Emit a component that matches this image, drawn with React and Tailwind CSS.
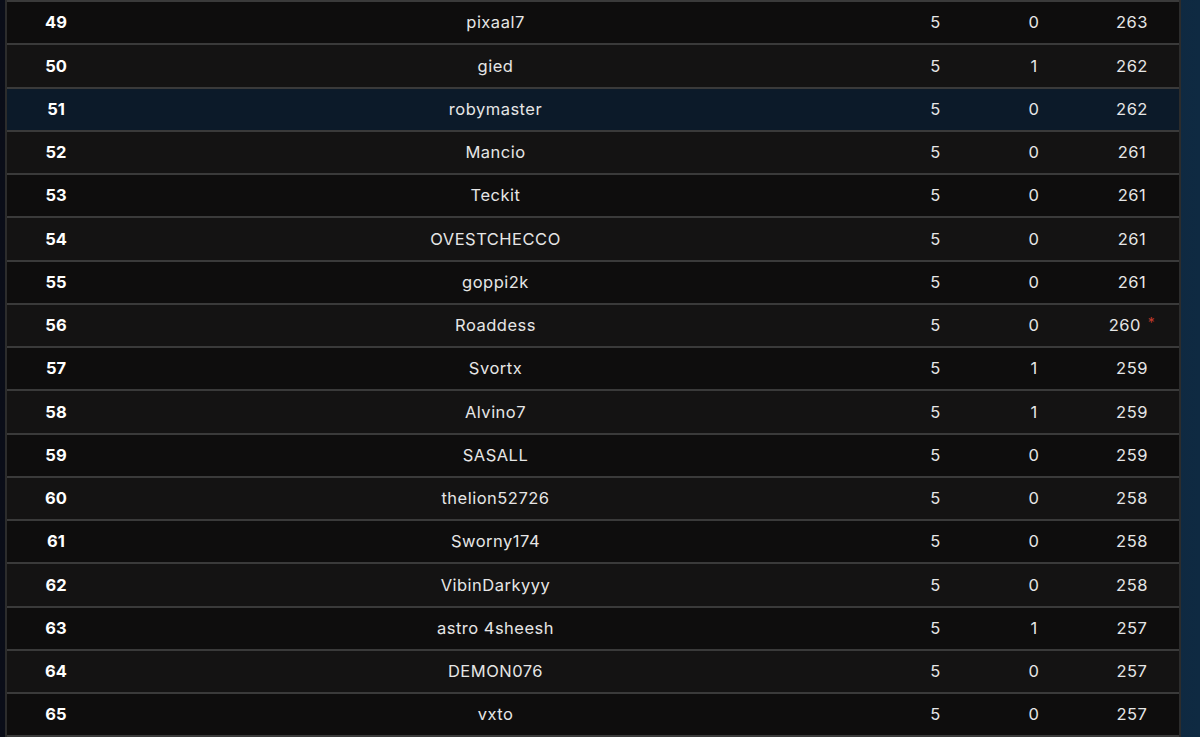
import React from 'react';

// leaderboard rows: rank, player, played, bonus, points
const rows = [
  [49, 'pixaal7', 5, 0, 263],
  [50, 'gied', 5, 1, 262],
  [51, 'robymaster', 5, 0, 262],
  [52, 'Mancio', 5, 0, 261],
  [53, 'Teckit', 5, 0, 261],
  [54, 'OVESTCHECCO', 5, 0, 261],
  [55, 'goppi2k', 5, 0, 261],
  [56, 'Roaddess', 5, 0, 260, true],
  [57, 'Svortx', 5, 1, 259],
  [58, 'Alvino7', 5, 1, 259],
  [59, 'SASALL', 5, 0, 259],
  [60, 'thelion52726', 5, 0, 258],
  [61, 'Sworny174', 5, 0, 258],
  [62, 'VibinDarkyyy', 5, 0, 258],
  [63, 'astro 4sheesh', 5, 1, 257],
  [64, 'DEMON076', 5, 0, 257],
  [65, 'vxto', 5, 0, 257],
];

const HIGHLIGHT = 51;

const Row = ({ rank, name, played, bonus, points, flagged }) => {
  const bg =
    rank === HIGHLIGHT
      ? 'bg-[#0c1a29]'
      : rank % 2 === 0
      ? 'bg-[#141313]'
      : 'bg-[#0e0d0d]';

  return (
    <div
      className={`grid grid-cols-[98px_781px_99px_98px_98px] h-[43.25px] border-t-2 border-[#3a3a3a] items-center text-[16.5px] tracking-[0.03em] text-[#e6e6e6] ${bg}`}
    >
      <div className="text-center font-bold text-white tracking-normal">{rank}</div>
      <div className="text-center">{name}</div>
      <div className="text-center">{played}</div>
      <div className="text-center">{bonus}</div>
      <div className="text-center">
        {points}
        {flagged && (
          <span className="relative top-[-3px] ml-[7px] text-[14px] text-[#c0392b]">*</span>
        )}
      </div>
    </div>
  );
};

export default function App() {
  return (
    <div
      className="w-[1200px] h-[737px] overflow-hidden bg-[linear-gradient(90deg,#0a0d18_0%,#0b1222_50%,#0f2a42_100%)]"
      style={{ fontFamily: 'Inter, "Open Sans", sans-serif' }}
    >
      <div className="ml-[5px] w-[1176px] border-x-2 border-[#2c2c2c] bg-[#101010]">
        {rows.map(([rank, name, played, bonus, points, flagged]) => (
          <Row
            key={rank}
            rank={rank}
            name={name}
            played={played}
            bonus={bonus}
            points={points}
            flagged={flagged}
          />
        ))}
        <div className="border-t-2 border-[#3a3a3a] h-[10px]" />
      </div>
    </div>
  );
}
